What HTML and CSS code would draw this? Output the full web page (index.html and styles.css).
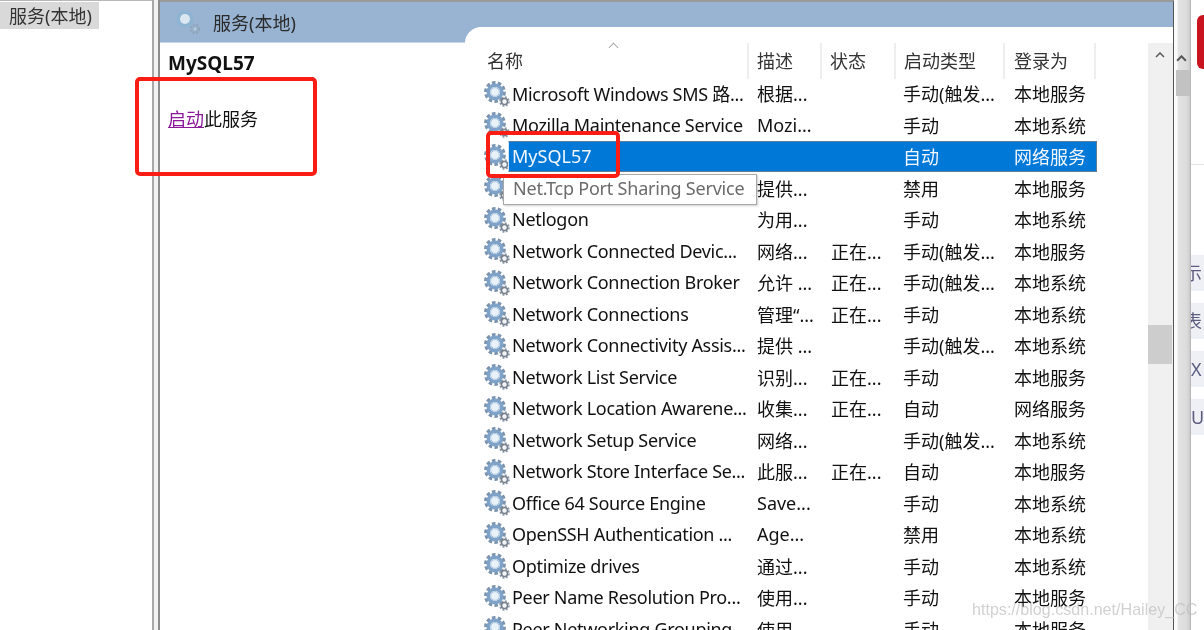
FILE: index.html
```html
<!DOCTYPE html>
<html lang="zh-CN">
<head>
<meta charset="utf-8">
<title>服务(本地)</title>
<link rel="stylesheet" href="styles.css">
</head>
<body>
<svg class="defs" width="0" height="0" aria-hidden="true">
  <defs>
    <symbol id="gear" viewBox="0 0 26 26">
      <circle cx="11" cy="11" r="9" fill="none" stroke="#7b93ad" stroke-width="3.8" stroke-dasharray="3.4 2.2"/>
      <circle cx="11" cy="11" r="6.8" fill="none" stroke="#7fa3c8" stroke-width="3.4"/>
      <circle cx="11" cy="11" r="4.4" fill="#eaf2f9" stroke="#a9c6e0" stroke-width="1"/>
      <circle cx="20.5" cy="20.5" r="4" fill="none" stroke="#8b99a8" stroke-width="2.6" stroke-dasharray="1.8 1.3"/>
      <circle cx="20.5" cy="20.5" r="3" fill="none" stroke="#77808c" stroke-width="1.6"/>
      <circle cx="20.5" cy="20.5" r="1.5" fill="#eef2f6"/>
    </symbol>
    <symbol id="gear-light" viewBox="0 0 26 26">
      <circle cx="10" cy="10" r="7" fill="none" stroke="#8db4d2" stroke-width="3"/>
      <circle cx="10" cy="10" r="5" fill="#dbe8f2"/>
      <circle cx="20" cy="20" r="3.8" fill="none" stroke="#8ea3b8" stroke-width="2.6" stroke-dasharray="1.8 1.3"/>
      <circle cx="20" cy="20" r="1.6" fill="#b6c9db"/>
    </symbol>
  </defs>
</svg>
<div class="screen">
  <aside class="tree">
    <div class="tree-tab">服务(本地)</div>
  </aside>
  <div class="splitter"></div>
  <main class="console">
    <header class="console-head">
      <svg class="head-gear"><use href="#gear-light"/></svg>
      <span>服务(本地)</span>
    </header>
    <div class="console-body">
      <section class="details">
        <h1 class="details-title">MySQL57</h1>
        <p class="details-action"><a class="start-link" href="#">启动</a>此服务</p>
      </section>
      <section class="list">
        <div class="table">
          <div class="columns">
            <div class="col col-name">名称<span class="sort"></span></div>
            <div class="col">描述</div>
            <div class="col">状态</div>
            <div class="col">启动类型</div>
            <div class="col">登录为</div>
          </div>
          <div class="row"><svg class="gear"><use href="#gear"/></svg><div class="cells"><span>Microsoft Windows SMS 路...</span><span>根据...</span><span></span><span>手动(触发...</span><span>本地服务</span></div></div>
          <div class="row"><svg class="gear"><use href="#gear"/></svg><div class="cells"><span>Mozilla Maintenance Service</span><span>Mozi...</span><span></span><span>手动</span><span>本地系统</span></div></div>
          <div class="row"><svg class="gear"><use href="#gear"/></svg><div class="cells selected"><span>MySQL57</span><span></span><span></span><span>自动</span><span>网络服务</span></div></div>
          <div class="row"><svg class="gear"><use href="#gear"/></svg><div class="cells"><span>Net.Tcp Port Sharing Service</span><span>提供...</span><span></span><span>禁用</span><span>本地服务</span></div></div>
          <div class="row"><svg class="gear"><use href="#gear"/></svg><div class="cells"><span>Netlogon</span><span>为用...</span><span></span><span>手动</span><span>本地系统</span></div></div>
          <div class="row"><svg class="gear"><use href="#gear"/></svg><div class="cells"><span>Network Connected Devic...</span><span>网络...</span><span>正在...</span><span>手动(触发...</span><span>本地服务</span></div></div>
          <div class="row"><svg class="gear"><use href="#gear"/></svg><div class="cells"><span>Network Connection Broker</span><span>允许 ...</span><span>正在...</span><span>手动(触发...</span><span>本地系统</span></div></div>
          <div class="row"><svg class="gear"><use href="#gear"/></svg><div class="cells"><span>Network Connections</span><span>管理“...</span><span>正在...</span><span>手动</span><span>本地系统</span></div></div>
          <div class="row"><svg class="gear"><use href="#gear"/></svg><div class="cells"><span>Network Connectivity Assis...</span><span>提供 ...</span><span></span><span>手动(触发...</span><span>本地系统</span></div></div>
          <div class="row"><svg class="gear"><use href="#gear"/></svg><div class="cells"><span>Network List Service</span><span>识别...</span><span>正在...</span><span>手动</span><span>本地服务</span></div></div>
          <div class="row"><svg class="gear"><use href="#gear"/></svg><div class="cells"><span>Network Location Awarene...</span><span>收集...</span><span>正在...</span><span>自动</span><span>网络服务</span></div></div>
          <div class="row"><svg class="gear"><use href="#gear"/></svg><div class="cells"><span>Network Setup Service</span><span>网络...</span><span></span><span>手动(触发...</span><span>本地系统</span></div></div>
          <div class="row"><svg class="gear"><use href="#gear"/></svg><div class="cells"><span>Network Store Interface Se...</span><span>此服...</span><span>正在...</span><span>自动</span><span>本地服务</span></div></div>
          <div class="row"><svg class="gear"><use href="#gear"/></svg><div class="cells"><span>Office 64 Source Engine</span><span>Save...</span><span></span><span>手动</span><span>本地系统</span></div></div>
          <div class="row"><svg class="gear"><use href="#gear"/></svg><div class="cells"><span>OpenSSH Authentication ...</span><span>Age...</span><span></span><span>禁用</span><span>本地系统</span></div></div>
          <div class="row"><svg class="gear"><use href="#gear"/></svg><div class="cells"><span>Optimize drives</span><span>通过...</span><span></span><span>手动</span><span>本地系统</span></div></div>
          <div class="row"><svg class="gear"><use href="#gear"/></svg><div class="cells"><span>Peer Name Resolution Pro...</span><span>使用...</span><span></span><span>手动</span><span>本地服务</span></div></div>
          <div class="row"><svg class="gear"><use href="#gear"/></svg><div class="cells"><span>Peer Networking Grouping</span><span>使用...</span><span></span><span>手动</span><span>本地服务</span></div></div>
        </div>
        <div class="scrollbar">
          <svg class="arrow" viewBox="0 0 10 6"><path d="M1 5 L5 1 L9 5" fill="none" stroke="#606060" stroke-width="1.6"/></svg>
          <div class="thumb"></div>
        </div>
      </section>
    </div>
  </main>
  <div class="outer-scroll">
    <svg class="arrow-outer" viewBox="0 0 10 6"><path d="M1 5 L5 1 L9 5" fill="none" stroke="#555" stroke-width="1.8"/></svg>
    <div class="outer-thumb"></div>
  </div>
  <aside class="page">
    <div class="page-red"></div>
    <div class="page-rule"></div>
    <div class="page-band">示</div>
    <div class="page-band">表</div>
    <div class="page-band">X</div>
    <div class="page-band">UI</div>
  </aside>
  <div class="tooltip">Net.Tcp Port Sharing Service</div>
  <div class="mark mark-action"></div>
  <div class="mark mark-row"></div>
  <div class="watermark">https://blog.csdn.net/Hailey_CC</div>
</div>
</body>
</html>
```
FILE: styles.css
```css
* { box-sizing: border-box; }
html, body { margin: 0; padding: 0; background: #fff; }
.defs { position: absolute; }
.screen {
  position: relative;
  display: flex;
  width: 1204px;
  height: 630px;
  overflow: hidden;
  font-family: "Noto Sans", "Noto Sans CJK SC", sans-serif;
  font-size: 18px;
  color: #111;
  background: #fff;
  filter: blur(0.35px);
}
.tree {
  width: 152px;
  flex: none;
  border-top: 1px solid #b8b8b8;
  padding-top: 1px;
}
.tree-tab {
  width: 99px;
  height: 27px;
  padding-left: 9px;
  line-height: 28px;
  background: #d9d9d9;
  color: #333;
}
.splitter {
  width: 8px;
  flex: none;
  background: #f2f2f2;
  border-left: 2px solid #a8a8a8;
  border-right: 2px solid #8c8c8c;
}
.console {
  width: 1014px;
  flex: none;
  display: flex;
  flex-direction: column;
  border-top: 2px solid #9a9a9a;
  border-right: 1px solid #555;
}
.console-head {
  flex: none;
  height: 41px;
  display: flex;
  align-items: center;
  gap: 12px;
  padding: 0 0 0 15px;
  background: #98b4d2;
  color: #2a2a2a;
  border-bottom: 1px solid #c5d5e6;
}
.head-gear { width: 26px; height: 26px; flex: none; }
.console-body { flex: 1; display: flex; min-height: 0; }
.details { width: 305px; flex: none; padding: 7px 0 0 8px; }
.details-title {
  margin: 0;
  font-size: 19px;
  font-weight: 700;
  line-height: 26px;
  color: #111;
}
.details-action { margin: 30px 0 0; line-height: 26px; }
.start-link { color: #8b1a9b; text-decoration: underline; }
.list {
  flex: 1;
  min-width: 0;
  display: flex;
  margin-top: -16px;
  border-top-left-radius: 16px;
  background: #fff;
  overflow: hidden;
}
.table { flex: 1; min-width: 0; padding: 16px 0 0 19px; }
.columns {
  display: grid;
  grid-template-columns: 265px 73px 74px 109px 91px;
  height: 34.5px;
}
.col {
  position: relative;
  padding-left: 8px;
  line-height: 36px;
  border-right: 2px solid #eeeeee;
  color: #333;
}
.col:last-child { padding-left: 9px; }
.col-name { padding-left: 3px; }
.sort {
  position: absolute;
  left: 126px;
  top: 1px;
  width: 7px;
  height: 7px;
  border-left: 1px solid #aaa;
  border-top: 1px solid #aaa;
  transform: rotate(45deg);
}
.row { display: flex; height: 31.5px; }
.gear { width: 26px; height: 26px; flex: none; margin: 3px -2px 0 0; }
.cells {
  flex: none;
  width: 589px;
  display: grid;
  grid-template-columns: 241px 73px 74px 109px 92px;
  align-items: center;
  white-space: nowrap;
}
.cells span { padding-left: 8px; overflow: hidden; }
.cells span:nth-child(3), .cells span:nth-child(5) { padding-left: 9px; }
.cells span:nth-child(4) { padding-left: 7px; }
.cells span:first-child { padding-left: 4px; letter-spacing: -0.3px; }
.selected {
  height: 31px;
  grid-template-columns: 240px 73px 74px 109px 91px;
  background: #0078d7;
  color: #f2f8fd;
  border: 1px solid #5f7f99;
  border-left-color: #cfe4f5;
}
.selected span:first-child { padding-left: 3px; letter-spacing: 0; }
.scrollbar { width: 25px; flex: none; background: #f0f0f0; margin-top: 16px; position: relative; }
.arrow { position: absolute; left: 7px; top: 9px; width: 10px; height: 6px; }
.thumb { position: absolute; left: 0; right: 1px; top: 282px; height: 39px; background: #cdcdcd; }
.outer-scroll {
  width: 17px;
  flex: none;
  position: relative;
  background: linear-gradient(90deg, #fbfbfb 0, #fbfbfb 18%, #e2e2e2 25%, #dcdcdc 75%, #c9c9c9 96%, #888 100%);
}
.arrow-outer { position: absolute; left: 2px; top: 55px; width: 11px; height: 7px; }
.outer-thumb { position: absolute; left: 2px; right: 1px; top: 70px; height: 26px; background: #c2c2c2; }
.page { flex: 1; position: relative; overflow: hidden; }
.page-red {
  position: absolute;
  left: 6px;
  top: 15px;
  width: 20px;
  height: 54px;
  border-radius: 6px;
  background: #c9131e;
}
.page-rule { position: absolute; left: 0; right: 0; top: 164px; height: 1px; background: #e4e4e4; }
.page-band {
  position: absolute;
  left: -7px;
  width: 40px;
  height: 36px;
  padding-left: 7px;
  line-height: 36px;
  color: #5c5c80;
  background: #eef0f6;
}
.page-band:nth-child(3) { top: 255px; text-indent: -7px; }
.page-band:nth-child(4) { top: 303px; text-indent: -7px; }
.page-band:nth-child(5) { top: 351px; }
.page-band:nth-child(6) { top: 399px; }
.tooltip {
  position: absolute;
  left: 503px;
  top: 174px;
  width: 254px;
  height: 31px;
  padding-left: 9px;
  line-height: 27px;
  letter-spacing: -0.22px;
  white-space: nowrap;
  color: #6b6b6b;
  background: #fff;
  border: 1px solid #a8a8a8;
  box-shadow: 1px 1px 2px rgba(0,0,0,.2);
}
.mark { position: absolute; border: 4px solid #fa1d14; border-radius: 5px; }
.mark-action { left: 135px; top: 77px; width: 182px; height: 99px; }
.mark-row { left: 486px; top: 131px; width: 134px; height: 47px; }
.watermark {
  position: absolute;
  left: 972px;
  top: 600px;
  font-family: "Liberation Sans", sans-serif;
  font-size: 16.1px;
  white-space: nowrap;
  color: rgba(190,190,190,.7);
}
```
